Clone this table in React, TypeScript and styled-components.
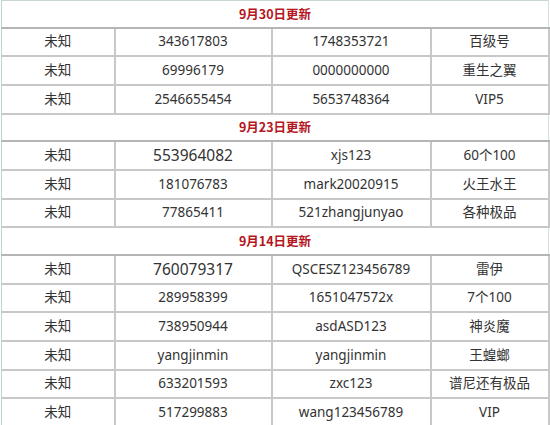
import { Fragment } from 'react';
import styled, { createGlobalStyle } from 'styled-components';

const GlobalStyle = createGlobalStyle`
  html, body {
    margin: 0;
    padding: 0;
    background: #ffffff;
  }
  body {
    font-family: "Noto Sans", "Noto Sans CJK SC", sans-serif;
  }
`;

const Page = styled.div`
  padding: 0 0 0 1px;
  width: 549px;
  height: 425px;
  overflow: hidden;
`;

const Table = styled.table`
  width: 547px;
  border-collapse: collapse;
  table-layout: fixed;
  border-left: 1px solid #b9d3d0;
  border-top: 1px solid #c9d6d4;
`;

const Col = styled.col<{ $width: number }>`
  width: ${({ $width }) => $width}px;
`;

const HeaderCell = styled.td`
  height: 25.8px;
  padding: 0;
  line-height: 1;
  text-align: center;
  font-family: "Noto Sans CJK SC", sans-serif;
  font-weight: bold;
  font-size: 12.5px;
  color: #b5161c;
  border-bottom: 2px solid #b5b5b5;
  border-right: 1px solid #d8dede;
`;

const Cell = styled.td<{ $big?: boolean }>`
  height: 26.64px;
  padding: 0;
  line-height: 1;
  text-align: center;
  font-size: ${({ $big }) => ($big ? '15.5px' : '13.5px')};
  color: #333333;
  border-bottom: 2px solid #c8c8c8;
  border-right: 2px solid #c8c8c8;
  white-space: nowrap;
`;

type Row = [string, string, string, string, boolean?];

type Section = { title: string; rows: Row[] };

const columns = [113, 157, 159, 118];

const sections: Section[] = [
  {
    title: '9月30日更新',
    rows: [
      ['未知', '343617803', '1748353721', '百级号'],
      ['未知', '69996179', '0000000000', '重生之翼'],
      ['未知', '2546655454', '5653748364', 'VIP5'],
    ],
  },
  {
    title: '9月23日更新',
    rows: [
      ['未知', '553964082', 'xjs123', '60个100', true],
      ['未知', '181076783', 'mark20020915', '火王水王'],
      ['未知', '77865411', '521zhangjunyao', '各种极品'],
    ],
  },
  {
    title: '9月14日更新',
    rows: [
      ['未知', '760079317', 'QSCESZ123456789', '雷伊', true],
      ['未知', '289958399', '1651047572x', '7个100'],
      ['未知', '738950944', 'asdASD123', '神炎魔'],
      ['未知', 'yangjinmin', 'yangjinmin', '王蝗螂'],
      ['未知', '633201593', 'zxc123', '谱尼还有极品'],
      ['未知', '517299883', 'wang123456789', 'VIP'],
    ],
  },
];

const App = () => {
  return (
    <>
      <GlobalStyle />
      <Page>
        <Table>
          <colgroup>
            {columns.map((w, i) => (
              <Col key={i} $width={w} />
            ))}
          </colgroup>
          <tbody>
            {sections.map((section) => (
              <Fragment key={section.title}>
                <tr>
                  <HeaderCell colSpan={4}>{section.title}</HeaderCell>
                </tr>
                {section.rows.map(([status, qq, password, note, big], i) => (
                  <tr key={i}>
                    <Cell>{status}</Cell>
                    <Cell $big={big}>{qq}</Cell>
                    <Cell>{password}</Cell>
                    <Cell>{note}</Cell>
                  </tr>
                ))}
              </Fragment>
            ))}
          </tbody>
        </Table>
      </Page>
    </>
  );
};

export default App;
